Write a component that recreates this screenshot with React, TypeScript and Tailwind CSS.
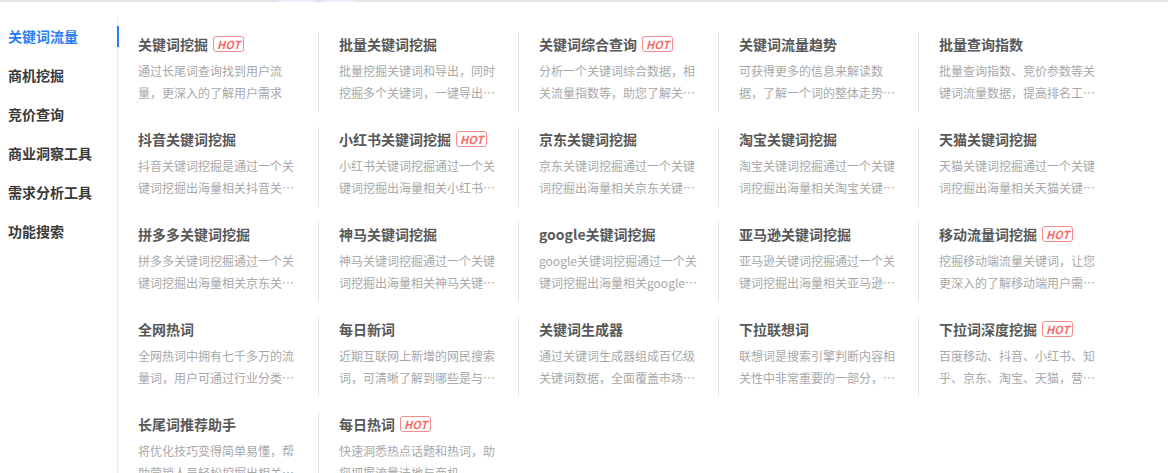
import React from "react";

type Tool = { title: string; desc: string; hot?: boolean };

const menu = ["关键词流量", "商机挖掘", "竞价查询", "商业洞察工具", "需求分析工具", "功能搜索"];

const tools: Tool[] = [
  { title: "关键词挖掘", desc: "通过长尾词查询找到用户流量，更深入的了解用户需求", hot: true },
  { title: "批量关键词挖掘", desc: "批量挖掘关键词和导出，同时挖掘多个关键词，一键导出关键词数据" },
  { title: "关键词综合查询", desc: "分析一个关键词综合数据，相关流量指数等，助您了解关键词价值", hot: true },
  { title: "关键词流量趋势", desc: "可获得更多的信息来解读数据，了解一个词的整体走势变化" },
  { title: "批量查询指数", desc: "批量查询指数、竞价参数等关键词流量数据，提高排名工作效率" },
  { title: "抖音关键词挖掘", desc: "抖音关键词挖掘是通过一个关键词挖掘出海量相关抖音关键词" },
  { title: "小红书关键词挖掘", desc: "小红书关键词挖掘通过一个关键词挖掘出海量相关小红书关键词", hot: true },
  { title: "京东关键词挖掘", desc: "京东关键词挖掘通过一个关键词挖掘出海量相关京东关键词，助力店铺引流" },
  { title: "淘宝关键词挖掘", desc: "淘宝关键词挖掘通过一个关键词挖掘出海量相关淘宝关键词，助力店铺引流" },
  { title: "天猫关键词挖掘", desc: "天猫关键词挖掘通过一个关键词挖掘出海量相关天猫关键词，助力店铺引流" },
  { title: "拼多多关键词挖掘", desc: "拼多多关键词挖掘通过一个关键词挖掘出海量相关京东关键词，助力店铺引流" },
  { title: "神马关键词挖掘", desc: "神马关键词挖掘通过一个关键词挖掘出海量相关神马关键词，提升移动端流量" },
  { title: "google关键词挖掘", desc: "google关键词挖掘通过一个关键词挖掘出海量相关google关键词" },
  { title: "亚马逊关键词挖掘", desc: "亚马逊关键词挖掘通过一个关键词挖掘出海量相关亚马逊关键词" },
  { title: "移动流量词挖掘", desc: "挖掘移动端流量关键词，让您更深入的了解移动端用户需求和搜索习惯", hot: true },
  { title: "全网热词", desc: "全网热词中拥有七千多万的流量词，用户可通过行业分类查询热词" },
  { title: "每日新词", desc: "近期互联网上新增的网民搜索词，可清晰了解到哪些是与行业相关的新词" },
  { title: "关键词生成器", desc: "通过关键词生成器组成百亿级关键词数据，全面覆盖市场需求" },
  { title: "下拉联想词", desc: "联想词是搜索引擎判断内容相关性中非常重要的一部分，影响排名" },
  { title: "下拉词深度挖掘", desc: "百度移动、抖音、小红书、知乎、京东、淘宝、天猫，营销渠道全覆盖", hot: true },
  { title: "长尾词推荐助手", desc: "将优化技巧变得简单易懂，帮助营销人员轻松挖掘出相关关键词" },
  { title: "每日热词", desc: "快速洞悉热点话题和热词，助您把握流量洼地与商机", hot: true },
];

const HotBadge = () => (
  <span className="ml-[5px] inline-flex h-[16px] items-center rounded-[3px] border border-[#f78b8b] px-[3px] text-[11px] font-semibold italic leading-none text-[#f56c6c]">
    HOT
  </span>
);

export default function App() {
  return (
    <div
      className="h-[473px] w-[1168px] overflow-hidden bg-white"
      style={{ fontFamily: '"Noto Sans CJK SC", "Noto Sans", sans-serif' }}
    >
      {/* top edge of the tabs above */}
      <div className="relative h-[4px] border-t-2 border-[#e3e3e3]">
        <div className="absolute left-[278px] top-[-2px] h-[2px] w-[37px] bg-[#e6edf8]" />
        <div className="absolute left-[322px] top-[-2px] h-[2px] w-[36px] bg-[#e6edf8]" />
      </div>

      <div className="mt-[13px] flex">
        {/* Sidebar */}
        <div className="h-[460px] w-[118px] shrink-0 border-r border-[#e8e8e8]">
          {menu.map((item, i) => (
            <div key={item} className="relative flex h-[39px] items-center pl-[8px]">
              <span
                className={
                  i === 0
                    ? "text-[14px] font-bold text-[#2a7ef5]"
                    : "text-[14px] font-bold text-[#3a3a3a]"
                }
              >
                {item}
              </span>
              {i === 0 && (
                <div className="absolute right-[-2px] top-[9px] h-[21px] w-[2px] bg-[#2a7ef5]" />
              )}
            </div>
          ))}
        </div>

        {/* Tool grid */}
        <div className="grid grid-cols-[repeat(5,200px)] gap-y-[15px] pt-[15px]">
          {tools.map((t, i) => (
            <div
              key={t.title}
              className={
                i % 5 === 0
                  ? "h-[80px] pl-[20px] pr-[20px] pt-[2px]"
                  : "h-[80px] border-l border-[#e6e6e6] pl-[20px] pr-[20px] pt-[2px]"
              }
            >
              <div className="flex h-[20px] items-center">
                <span className="text-[14px] font-bold leading-[20px] text-[#585858]">{t.title}</span>
                {t.hot && <HotBadge />}
              </div>
              <p className="mt-[6px] line-clamp-2 w-[158px] text-[12px] leading-[22px] text-[#a8a8a8]">
                {t.desc}
              </p>
            </div>
          ))}
        </div>
      </div>
    </div>
  );
}
